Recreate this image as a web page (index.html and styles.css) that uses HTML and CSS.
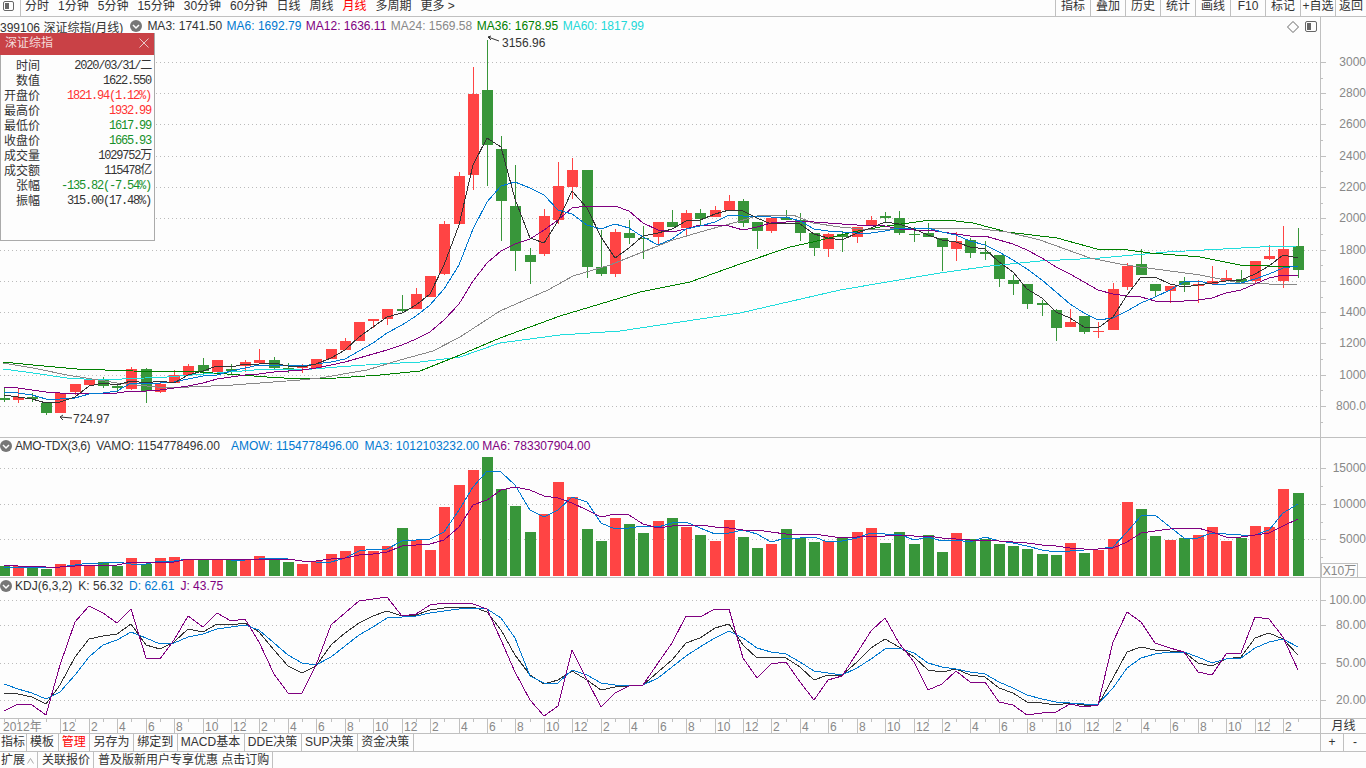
FILE: index.html
```html
<!DOCTYPE html>
<html lang="en">
<head>
    <meta charset="UTF-8">
    <meta name="viewport" content="width=device-width, initial-scale=1.0">
    <title>深证综指</title>
    <link rel="stylesheet" href="styles.css">
</head>
<body>

    <div class="toolbar">
        <div class="layout-btn">
            <svg width="13" height="12" viewBox="0 0 13 12"><rect x="1.5" y="1.5" width="10" height="9" rx="1.5" class="ico-line"/><rect x="3" y="3" width="4" height="6" class="ico-fill"/></svg>
        </div>
        <div class="periods">
            <span>分时</span><span>1分钟</span><span>5分钟</span><span>15分钟</span><span>30分钟</span><span>60分钟</span><span>日线</span><span>周线</span><span class="active">月线</span><span>多周期</span><span>更多 &gt;</span>
        </div>
        <div class="tools">
            <span>指标</span><span>叠加</span><span>历史</span><span>统计</span><span>画线</span><span>F10</span><span>标记</span><span>+自选</span><span>返回</span>
        </div>
    </div>

    <div class="pane pane-main">
        <svg id="mainChart" class="chart" viewBox="0 17 1366 420" width="1366" height="420"></svg>
        <div class="legend">
            <span>399106 深证综指(月线)</span>
            <svg class="drop" width="12" height="12" viewBox="0 0 12 12"><circle cx="6" cy="6" r="6" class="drop-bg"/><polyline points="3,5 6,8 9,5" class="drop-arrow"/></svg>
            <span>MA3: 1741.50</span>
            <span class="c-blue">MA6: 1692.79</span>
            <span class="c-purple">MA12: 1636.11</span>
            <span class="c-gray">MA24: 1569.58</span>
            <span class="c-green">MA36: 1678.95</span>
            <span class="c-cyan">MA60: 1817.99</span>
        </div>
        <div class="corner-icons">
            <svg width="12" height="12" viewBox="0 0 12 12"><polygon points="6,0.5 11.5,6 6,11.5 0.5,6" class="ico-line"/></svg>
            <svg width="13" height="12" viewBox="0 0 13 12"><rect x="0.5" y="0.5" width="11" height="10" rx="1.5" class="ico-line"/><rect x="2" y="2" width="4" height="7" class="ico-fill"/></svg>
        </div>
        <div class="info-panel">
            <div class="info-head">
                <span>深证综指</span>
                <svg width="10" height="10" viewBox="0 0 10 10"><path d="M0.5 0.5 L9.5 9.5 M9.5 0.5 L0.5 9.5" class="close-x"/></svg>
            </div>
            <div class="info-rows">
                <span class="lbl">时间</span><span class="val">2020/03/31/二</span>
                <span class="lbl">数值</span><span class="val">1622.550</span>
                <span class="lbl">开盘价</span><span class="val up">1821.94(1.12%)</span>
                <span class="lbl">最高价</span><span class="val up">1932.99</span>
                <span class="lbl">最低价</span><span class="val down">1617.99</span>
                <span class="lbl">收盘价</span><span class="val down">1665.93</span>
                <span class="lbl">成交量</span><span class="val">1029752万</span>
                <span class="lbl">成交额</span><span class="val">115478亿</span>
                <span class="lbl">张幅</span><span class="val down">-135.82(-7.54%)</span>
                <span class="lbl">振幅</span><span class="val">315.00(17.48%)</span>
            </div>
        </div>
    </div>

    <div class="pane pane-vol">
        <svg id="volChart" class="chart" viewBox="0 438 1366 139" width="1366" height="139"></svg>
        <div class="legend legend-sub">
            <svg class="drop" width="12" height="12" viewBox="0 0 12 12"><circle cx="6" cy="6" r="6" class="drop-bg"/><polyline points="3,5 6,8 9,5" class="drop-arrow"/></svg>
            <span class="tight-name">AMO-TDX(3,6)</span>
            <span>VAMO: 1154778496.00</span>
            <span class="c-blue gap-wide">AMOW: 1154778496.00</span>
            <span class="c-blue">MA3: 1012103232.00</span>
            <span class="c-purple gap-tight">MA6: 783307904.00</span>
        </div>
        <div class="unit-box">X10万</div>
    </div>

    <div class="pane pane-kdj">
        <svg id="kdjChart" class="chart" viewBox="0 578 1366 140" width="1366" height="140"></svg>
        <div class="legend legend-sub">
            <svg class="drop" width="12" height="12" viewBox="0 0 12 12"><circle cx="6" cy="6" r="6" class="drop-bg"/><polyline points="3,5 6,8 9,5" class="drop-arrow"/></svg>
            <span>KDJ(6,3,2)</span>
            <span>K: 56.32</span>
            <span class="c-blue">D: 62.61</span>
            <span class="c-purple">J: 43.75</span>
        </div>
    </div>

    <div class="pane pane-date">
        <svg id="dateAxis" class="chart" viewBox="0 719 1320 14" width="1320" height="14"></svg>
        <div class="period-name">月线</div>
    </div>

    <div class="tabs">
        <span>指标</span><span>模板</span><span class="active">管理</span><span>另存为</span><span>绑定到</span><span>MACD基本</span><span>DDE决策</span><span>SUP决策</span><span>资金决策</span>
        <div class="zoom-btns"><span>+</span><span>-</span></div>
    </div>

    <div class="extbar">
        <span>扩展<svg class="caret-ico" width="7" height="6" viewBox="0 0 7 6"><polyline points="0.5,5.5 3.5,0.5 6.5,5.5" class="caret"/></svg></span><span>关联报价</span><span>普及版新用户专享优惠 点击订购</span>
    </div>

    <script src="chart.js"></script>

</body>
</html>
```

FILE: styles.css
```css
* { box-sizing: border-box; }
html, body { margin: 0; padding: 0; height: 768px; overflow: hidden; }
body { width: 1366px; background: #fdfdfd; color: #333; font-family: "Liberation Sans", "Noto Sans CJK SC", sans-serif; font-size: 12px; }

.toolbar { display: flex; height: 17px; border-bottom: 1px solid #c0c0c0; line-height: 13px; overflow: hidden; }
.layout-btn { width: 21px; padding: 0 0 0 2px; border-right: 1px solid #c0c0c0; }
.periods { display: flex; gap: 9px; padding-left: 4px; }
.periods .active { color: #f00; }
.tools { display: flex; margin-left: auto; }
.tools span { width: 35px; border-left: 1px solid #c0c0c0; text-align: center; white-space: nowrap; }
.tools span:last-child { width: 31px; }

.pane { position: relative; border-bottom: 1px solid #c0c0c0; }
.pane-main { height: 421px; }
.pane-vol { height: 140px; }
.pane-kdj { height: 141px; }
.pane-date { height: 15px; }
.chart { display: block; overflow: visible; }

.legend { position: absolute; top: 1px; left: 0; display: flex; align-items: center; gap: 4.5px; height: 16px; white-space: nowrap; }
.legend .drop { margin: 0 0.5px 0 2.5px; }
.legend-sub { top: -1px; height: 17px; gap: 6px; }
.legend-sub .drop { margin: 0 -3px 0 0; }
.tight-name { letter-spacing: -0.4px; }
.gap-wide { margin-left: 5px; }
.gap-tight { margin-left: -3px; }
.drop-bg { fill: #777; }
.drop-arrow { fill: none; stroke: #fff; stroke-width: 1.5; }
.c-blue { color: #0078d0; }
.c-purple { color: #800080; }
.c-gray { color: #888; }
.c-green { color: #008000; }
.c-cyan { color: #22d8d8; }

.corner-icons { position: absolute; top: 4px; left: 1287px; display: flex; gap: 6px; }
.ico-line { fill: none; stroke: #666; }
.ico-fill { fill: #666; }

.info-panel { position: absolute; top: 16px; left: 0; width: 155px; height: 208px; background: #fdfdfd; border: 1px solid #aaa; border-top: 0; }
.info-head { display: flex; justify-content: space-between; align-items: flex-start; height: 22px; margin-left: -1px; padding: 2px 5px 0; line-height: 16px; background: #c94146; color: #f4dcdc; }
.info-head svg { margin-top: 3px; }
.close-x { fill: none; stroke: #e8c8c8; }
.info-rows { display: grid; grid-template-columns: 39px 1fr; grid-auto-rows: 15px; padding-top: 4px; line-height: 15px; }
.lbl { text-align: right; }
.val { padding-right: 3px; text-align: right; font-family: "Liberation Mono", "Noto Sans CJK SC", monospace; letter-spacing: -1.2px; white-space: nowrap; }
.up { color: #ff3232; }
.down { color: #16902a; }

.unit-box { position: absolute; right: 8px; bottom: 0; width: 37px; height: 14px; border: 1px solid #c0c0c0; border-bottom: 0; color: #888; line-height: 14px; text-align: center; background: #fdfdfd; }

.period-name { position: absolute; top: 0; left: 1320px; width: 46px; border-left: 1px solid #c0c0c0; height: 14px; line-height: 15px; text-align: center; }

.tabs { display: flex; height: 18px; border-bottom: 1px solid #c0c0c0; line-height: 17px; }
.tabs > span { padding: 0 3.7px 0 3px; border-right: 1px solid #c0c0c0; }
.tabs > span:first-child { padding-left: 1px; padding-right: 1px; }
.tabs .active { color: #f00; }
.zoom-btns { display: flex; margin-left: auto; width: 46px; border-left: 1px solid #c0c0c0; }
.zoom-btns span { flex: 1; text-align: center; border-right: 1px solid #c0c0c0; }
.zoom-btns span:last-child { border-right: 0; }

.extbar { display: flex; height: 16px; line-height: 16px; }
.extbar span { padding: 0 3px 0 4px; border-right: 1px solid #c0c0c0; white-space: nowrap; }
.extbar span:first-child { padding-left: 1px; padding-right: 3px; }
.caret-ico { margin-left: 2px; }
.caret { fill: none; stroke: #aaa; }

.grid { stroke: #bbb; stroke-dasharray: 1 3; shape-rendering: crispEdges; }
.axis { stroke: #c0c0c0; shape-rendering: crispEdges; }
.axis-label { fill: #888; font-size: 12px; }
.bar-r { fill: #ff4444; shape-rendering: crispEdges; }
.bar-g { fill: #38963a; shape-rendering: crispEdges; }
.ma { fill: none; stroke-width: 1; shape-rendering: crispEdges; }
.l-black { stroke: #333; }
.l-blue { stroke: #0078d0; }
.l-purple { stroke: #800080; }
.l-gray { stroke: #888; }
.l-green { stroke: #008000; }
.l-cyan { stroke: #20dcdc; }
.note { fill: #333; font-size: 12px; }
.note-line { fill: none; stroke: #333; }
```

FILE: chart.js
```js
// monthly bars, values are pixel rows on the page: [body top, body bottom, high, low, colour]
const candles = [
    [398,400,388,402,"g"],[397,400,389,403,"r"],[397,399,393,402,"g"],[403,413,402,415,"g"],[393,413,393,413,"r"],
    [384,392,384,395,"r"],[380,385,378,385,"r"],[380,386,377,388,"g"],[386,388,383,393,"g"],[369,389,367,390,"r"],
    [369,391,368,403,"g"],[384,392,382,393,"r"],[375,383,370,383,"r"],[366,375,364,376,"r"],[365,371,358,375,"g"],
    [360,372,360,372,"r"],[369,371,364,374,"g"],[362,366,360,372,"r"],[360,363,349,363,"r"],[360,368,357,369,"g"],
    [368,369,363,373,"g"],[365,368,364,373,"r"],[359,368,359,368,"r"],[349,359,349,359,"r"],[341,350,338,350,"r"],
    [322,341,322,341,"r"],[319,321,319,328,"r"],[309,319,309,325,"r"],[309,311,295,313,"g"],[294,309,288,309,"r"],
    [276,297,276,297,"r"],[224,274,221,275,"r"],[176,224,172,224,"r"],[94,175,67,190,"r"],[90,145,40,186,"g"],
    [149,201,136,241,"g"],[206,251,165,271,"g"],[255,262,248,284,"g"],[216,254,209,256,"r"],[186,220,162,224,"r"],
    [170,187,158,199,"r"],[170,267,170,278,"g"],[267,274,230,276,"g"],[232,274,229,277,"r"],[233,238,220,244,"g"],
    [238,239,226,259,"g"],[222,237,222,245,"r"],[222,227,210,227,"g"],[213,228,210,235,"r"],[213,219,209,225,"g"],
    [210,217,206,217,"r"],[201,210,195,210,"r"],[201,223,199,227,"g"],[222,231,222,249,"g"],[218,231,218,233,"r"],
    [218,220,210,220,"g"],[220,233,213,241,"g"],[233,248,233,256,"g"],[234,249,233,257,"r"],[234,237,231,252,"g"],
    [227,237,227,243,"r"],[220,226,216,226,"r"],[216,218,212,222,"g"],[218,233,211,235,"g"],[234,235,227,242,"g"],
    [233,237,223,237,"g"],[238,247,238,271,"g"],[241,249,232,261,"r"],[240,253,238,258,"g"],[252,254,241,260,"g"],
    [255,279,255,287,"g"],[280,284,275,295,"g"],[284,304,284,309,"g"],[303,305,300,316,"g"],[310,328,309,341,"g"],
    [322,327,309,327,"r"],[316,332,316,334,"g"],[331,332,322,338,"r"],[289,330,283,330,"r"],[266,287,263,290,"r"],
    [264,275,249,275,"g"],[284,291,284,297,"g"],[286,291,286,303,"r"],[281,285,277,292,"g"],[284,286,280,303,"r"],
    [281,284,266,284,"r"],[278,281,270,281,"r"],[279,282,270,283,"g"],[261,281,261,284,"r"],[256,259,245,260,"r"],
    [249,281,226,288,"r"],[246,270,228,278,"g"]
];

// closes before the first visible bar, only there to start the short averages
const seedCloses = [382,382,382,382,382,382,389,389,389,392,393];

// the long averages, read off as [x, y] points
const ma24 = [[3,363],[33,368],[67,375],[117,383],[167,388],[233,385],[300,380],[320,378],[367,370],[400,360],[433,351],[460,337],[500,311],[548,290],[573,276],[610,265],[650,249],[673,240],[707,230],[737,222],[760,215],[793,215],[813,223],[840,227],[873,230],[907,228],[973,228],[1007,232],[1040,240],[1090,258],[1120,264],[1140,267],[1200,275],[1240,283],[1297,285]];
const ma36 = [[3,362],[33,365],[77,369],[133,371],[200,372],[267,377],[300,379],[337,378],[380,375],[420,371],[440,363],[460,355],[500,338],[560,316],[600,304],[640,292],[690,282],[740,264],[790,247],[813,242],[853,232],[880,227],[923,221],[947,220],[973,223],[1007,232],[1057,238],[1097,249],[1120,249],[1150,253],[1200,257],[1240,265],[1297,267]];
const ma60 = [[3,369],[33,373],[67,378],[100,380],[167,377],[217,373],[267,369],[300,370],[337,367],[380,364],[420,362],[460,357],[500,343],[560,335],[620,331],[640,328],[740,313],[840,290],[940,273],[990,266],[1040,261],[1100,258],[1167,252],[1260,247],[1297,246]];

const volTops = [566,566,568,569,564,560,566,562,566,558,564,558,557,559,560,560,560,560,556,559,562,564,561,554,551,546,551,546,528,540,550,507,485,470,457,489,506,532,514,482,497,529,541,518,524,533,521,518,527,535,541,520,537,548,544,529,538,542,541,538,532,528,543,532,544,535,552,533,539,539,544,546,549,554,555,543,553,550,539,502,509,536,540,538,535,527,541,538,526,527,489,493];
const volMa3 = [567,567,567,568,567,565,563,563,562,564,564,561,561,559,559,559,560,560,559,558,559,561,562,562,558,551,549,549,541,540,539,532,510,487,471,472,485,510,517,510,497,502,523,529,528,526,527,523,522,528,534,533,530,534,542,538,538,537,542,541,538,533,534,534,540,537,541,540,542,537,541,543,546,550,552,551,550,549,547,532,516,515,527,538,538,533,534,535,535,530,513,504];
const volMa6 = [565,566,566,567,567,566,565,565,565,562,562,562,562,559,559,559,559,559,559,559,559,561,561,559,558,555,554,552,546,545,544,540,527,505,500,490,487,490,496,498,503,510,517,514,515,524,528,526,525,525,527,528,530,530,532,534,534,534,536,538,537,536,536,535,536,536,538,539,540,540,541,542,543,545,546,548,549,549,548,542,533,531,529,528,528,532,537,537,535,533,526,519];

const kdjK = [693,694,697,704,685,657,639,636,634,624,645,649,642,629,632,624,625,623,632,650,666,673,666,645,633,623,616,611,616,615,610,608,607,607,612,630,655,675,684,680,671,680,690,687,686,685,672,660,643,638,628,624,645,658,657,658,667,680,675,675,662,648,639,647,657,670,672,669,675,677,688,693,702,703,705,703,705,705,678,652,647,650,651,652,663,666,659,657,638,633,639,655];
const kdjD = [684,689,693,699,692,675,657,645,640,632,638,644,643,637,634,629,627,625,630,643,655,663,665,657,646,635,627,618,617,616,613,611,609,608,609,618,638,676,683,683,670,675,683,685,686,685,678,667,656,647,638,631,638,648,652,654,662,671,673,675,668,659,649,648,653,663,667,669,672,674,682,688,695,699,702,703,704,704,688,668,658,654,652,652,657,663,659,658,648,642,639,647];
const kdjJ = [711,704,705,715,665,622,606,613,623,609,658,659,640,616,627,613,621,619,642,674,693,693,665,625,613,601,599,597,616,614,605,603,603,604,609,640,672,700,716,706,650,680,707,693,686,685,663,643,616,617,609,609,658,678,664,662,682,700,680,676,653,631,618,643,662,690,684,671,682,682,702,705,715,713,712,704,707,705,642,612,622,643,648,652,672,675,654,653,617,619,637,670];

const NS = "http://www.w3.org/2000/svg";
const PLOT_RIGHT = 1320;

function barX(i) {
    return Math.round(3.5 + 14.22 * i);
}

function add(svg, tag, attrs, text) {
    const el = document.createElementNS(NS, tag);
    for (const key in attrs) el.setAttribute(key, attrs[key]);
    if (text !== undefined) el.textContent = text;
    svg.appendChild(el);
    return el;
}

function hLine(svg, y, x1, x2, cls) {
    add(svg, "line", { x1: x1, x2: x2, y1: y + 0.5, y2: y + 0.5, class: cls });
}

function vLine(svg, x, y1, y2, cls) {
    add(svg, "line", { x1: x + 0.5, x2: x + 0.5, y1: y1, y2: y2, class: cls });
}

function polyline(svg, points, cls) {
    add(svg, "polyline", { points: points.map(p => p.join(",")).join(" "), class: "ma " + cls });
}

function seriesLine(svg, values, cls) {
    polyline(svg, values.map((y, i) => [barX(i), y]), cls);
}

function movingAverage(closes, n) {
    const all = seedCloses.concat(closes);
    return closes.map((c, i) => {
        const end = i + seedCloses.length + 1;
        const part = all.slice(end - n, end);
        return Math.round(part.reduce((a, b) => a + b, 0) / n);
    });
}

function yAxis(svg, top, bottom, labels, minors) {
    vLine(svg, PLOT_RIGHT, top, bottom, "axis");
    labels.forEach(l => {
        hLine(svg, l[0], 0, PLOT_RIGHT, "grid");
        hLine(svg, l[0], PLOT_RIGHT, PLOT_RIGHT + 6, "axis");
        add(svg, "text", { x: 1366, y: l[0] + 4, "text-anchor": "end", class: "axis-label" }, l[1]);
    });
    minors.forEach(y => hLine(svg, y, PLOT_RIGHT, PLOT_RIGHT + 3, "axis"));
}

function drawMain() {
    const svg = document.getElementById("mainChart");
    const prices = [[62,"3000"],[93,"2800"],[124,"2600"],[156,"2400"],[187,"2200"],[218,"2000"],[250,"1800"],[281,"1600"],[312,"1400"],[343,"1200"],[375,"1000"],[406,"800.0"]];
    const minors = [78,109,140,171,203,234,265,297,328,359,390,422];
    yAxis(svg, 17, 437, prices, minors);

    candles.forEach((c, i) => {
        const x = barX(i);
        const cls = c[4] === "r" ? "bar-r" : "bar-g";
        add(svg, "rect", { x: x, y: c[2], width: 1, height: c[3] - c[2], class: cls });
        add(svg, "rect", { x: x - 5, y: c[0], width: 11, height: Math.max(c[1] - c[0], 1), class: cls });
    });

    const closes = candles.map(c => (c[4] === "r" ? c[0] : c[1]));
    polyline(svg, ma60, "l-cyan");
    polyline(svg, ma36, "l-green");
    polyline(svg, ma24, "l-gray");
    seriesLine(svg, movingAverage(closes, 12), "l-purple");
    seriesLine(svg, movingAverage(closes, 6), "l-blue");
    seriesLine(svg, movingAverage(closes, 3), "l-black");

    // high and low markers
    add(svg, "path", { d: "M488 37 L499 41 M488 37 L491 36 M488 37 L491 40", class: "note-line" });
    add(svg, "text", { x: 502, y: 47, class: "note" }, "3156.96");
    add(svg, "path", { d: "M60 417 L72 418 M60 417 L63 415 M60 417 L63 420", class: "note-line" });
    add(svg, "text", { x: 73, y: 423, class: "note" }, "724.97");
}

function drawVolume() {
    const svg = document.getElementById("volChart");
    yAxis(svg, 438, 577, [[468,"15000"],[504,"10000"],[539,"5000"]], [486,522,557]);
    volTops.forEach((top, i) => {
        const cls = candles[i][4] === "r" ? "bar-r" : "bar-g";
        add(svg, "rect", { x: barX(i) - 5, y: top, width: 11, height: 576 - top, class: cls });
    });
    seriesLine(svg, volMa3, "l-blue");
    seriesLine(svg, volMa6, "l-purple");
}

function drawKdj() {
    const svg = document.getElementById("kdjChart");
    yAxis(svg, 578, 718, [[600,"100.00"],[625,"80.00"],[663,"50.00"],[700,"20.00"]], []);
    seriesLine(svg, kdjK, "l-black");
    seriesLine(svg, kdjD, "l-blue");
    seriesLine(svg, kdjJ, "l-purple");
}

function drawDates() {
    const svg = document.getElementById("dateAxis");
    const months = [12, 2, 4, 6, 8, 10];
    add(svg, "text", { x: 3, y: 731, class: "axis-label" }, "2012年");
    for (let i = 0; i < candles.length; i++) {
        const x = barX(i);
        vLine(svg, x, 719, 722, "axis");
        if (i >= 4 && i % 2 === 0) {
            vLine(svg, x, 719, 733, "axis");
            add(svg, "text", { x: x + 2, y: 731, class: "axis-label" }, months[((i - 4) / 2) % 6]);
        }
    }
}

drawMain();
drawVolume();
drawKdj();
drawDates();
```
